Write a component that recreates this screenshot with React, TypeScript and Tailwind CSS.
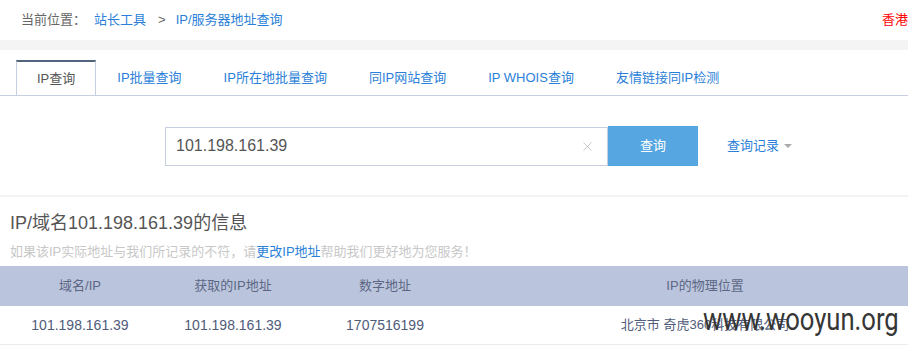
import { X } from "lucide-react";

const tabs = [
  "IP查询",
  "IP批量查询",
  "IP所在地批量查询",
  "同IP网站查询",
  "IP WHOIS查询",
  "友情链接同IP检测",
];

const columns = ["域名/IP", "获取的IP地址", "数字地址", "IP的物理位置"];
const values = ["101.198.161.39", "101.198.161.39", "1707516199", "北京市 奇虎360科技有限公司"];

const App = () => {
  return (
    <div className="relative w-[908px] h-[348px] overflow-hidden bg-white font-['Liberation_Sans','Noto_Sans_CJK_SC',sans-serif]">
      <div className="w-[946px]">
        {/* breadcrumb */}
        <div className="flex items-center h-[40px] pl-[21px] text-[13px]">
          <span className="text-[#666]">当前位置：</span>
          <span className="ml-[8px] text-[#2b7fd8]">站长工具</span>
          <span className="ml-[12px] text-[#666]">&gt;</span>
          <span className="ml-[10px] text-[#2b7fd8]">IP/服务器地址查询</span>
          <div className="flex-1" />
          <span className="w-[64px] text-[#ff0000]">香港节点</span>
        </div>

        <div className="h-[10px] bg-[#f4f4f4]" />

        {/* tabs */}
        <div className="pt-[10px]">
          <div className="flex pl-[16px] border-b border-[#c6cee0] text-[13px]">
            {tabs.map((tab, i) =>
              i === 0 ? (
                <div
                  key={tab}
                  className="h-[35px] -mb-px flex items-center px-[20px] border-t-2 border-x border-t-[#56657f] border-x-[#c6cee0] bg-white text-[#555]"
                >
                  {tab}
                </div>
              ) : (
                <div key={tab} className="h-[35px] flex items-center px-[21px] text-[#2b7fd8]">
                  {tab}
                </div>
              )
            )}
          </div>
        </div>

        {/* search */}
        <div className="h-[101px] pt-[30px] pl-[165px] border-b-2 border-[#f3f3f3]">
          <div className="flex items-center">
            <div className="w-[443px] h-[39px] flex items-center justify-between border border-[#c6cee0] pl-[10px] pr-[12px]">
              <span className="text-[16px] text-[#555]">101.198.161.39</span>
              <X size={15} strokeWidth={1} className="text-[#aaa]" />
            </div>
            <button className="w-[90px] h-[40px] bg-[#55a6e1] text-white text-[13px]">查询</button>
            <div className="ml-[29px] flex items-center gap-[5px] text-[13px] text-[#2b7fd8]">
              查询记录
              <span className="w-0 h-0 border-x-[4px] border-x-transparent border-t-[4px] border-t-[#aaa]" />
            </div>
          </div>
        </div>

        {/* info */}
        <div className="pl-[10px] pt-[13px]">
          <h2 className="text-[18px] leading-[26px] text-[#555]">IP/域名101.198.161.39的信息</h2>
          <p className="mt-[6px] text-[13px] leading-[20px] text-[#c8c8c8]">
            如果该IP实际地址与我们所记录的不符，请<span className="text-[#2b7fd8]">更改IP地址</span>
            帮助我们更好地为您服务！
          </p>
        </div>

        <div className="mt-[4px]">
          <div className="grid grid-cols-[160px_146px_158px_482px] h-[40px] items-center bg-[#bac5dd] text-[13px] text-[#5d6784]">
            {columns.map((c) => (
              <div key={c} className="text-center">
                {c}
              </div>
            ))}
          </div>
          <div className="grid grid-cols-[160px_146px_158px_482px] h-[39px] items-center border-b border-[#ebebeb] text-[14px] text-[#4f5b7a]">
            {values.map((v, i) => (
              <div key={i} className={i === 3 ? "text-center text-[13px]" : "text-center"}>
                {v}
              </div>
            ))}
          </div>
        </div>
      </div>

      {/* watermark */}
      <div className="absolute left-[703px] top-[299px] origin-left scale-x-[0.8] text-[32px] leading-[40px] text-[#363636] font-['Roboto',sans-serif] whitespace-nowrap">
        www.wooyun.org
      </div>
    </div>
  );
};

export default App;
